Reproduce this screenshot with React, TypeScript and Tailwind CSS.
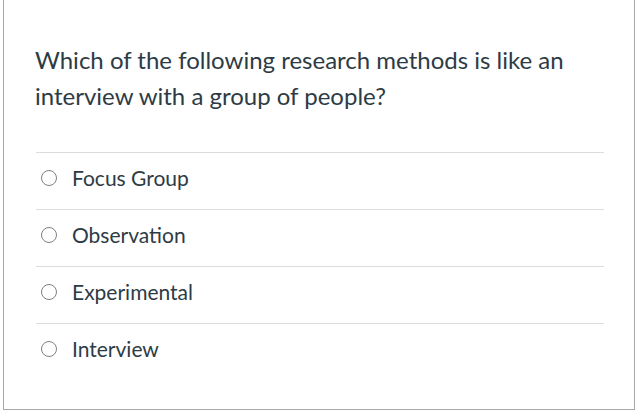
const options = ['Focus Group', 'Observation', 'Experimental', 'Interview'];

export default function App() {
  return (
    <div className="w-[638px] h-[411px] bg-white overflow-hidden" style={{ fontFamily: 'Lato, "Open Sans", sans-serif' }}>
      <div className="ml-[3px] w-[632px] h-[410px] border-x border-b border-[#a8a8a8] pl-[30px] pr-[30px] pt-[42px]">
        <p className="text-[24px] leading-[36px] text-[#2d3b45] pl-[1px]">
          Which of the following research methods is like an interview with a group of people?
        </p>
        <ul className="mt-[38px] ml-[2px]">
          {options.map((opt) => (
            <li key={opt} className="flex items-center h-[57px] border-t border-[#dcdcdc] pb-[7px]">
              <span className="ml-[5px] w-[16px] h-[16px] rounded-full border-[1.5px] border-[#808080] bg-white" />
              <span className="ml-[15px] text-[21px] text-[#2d3b45]">{opt}</span>
            </li>
          ))}
        </ul>
      </div>
    </div>
  );
}
